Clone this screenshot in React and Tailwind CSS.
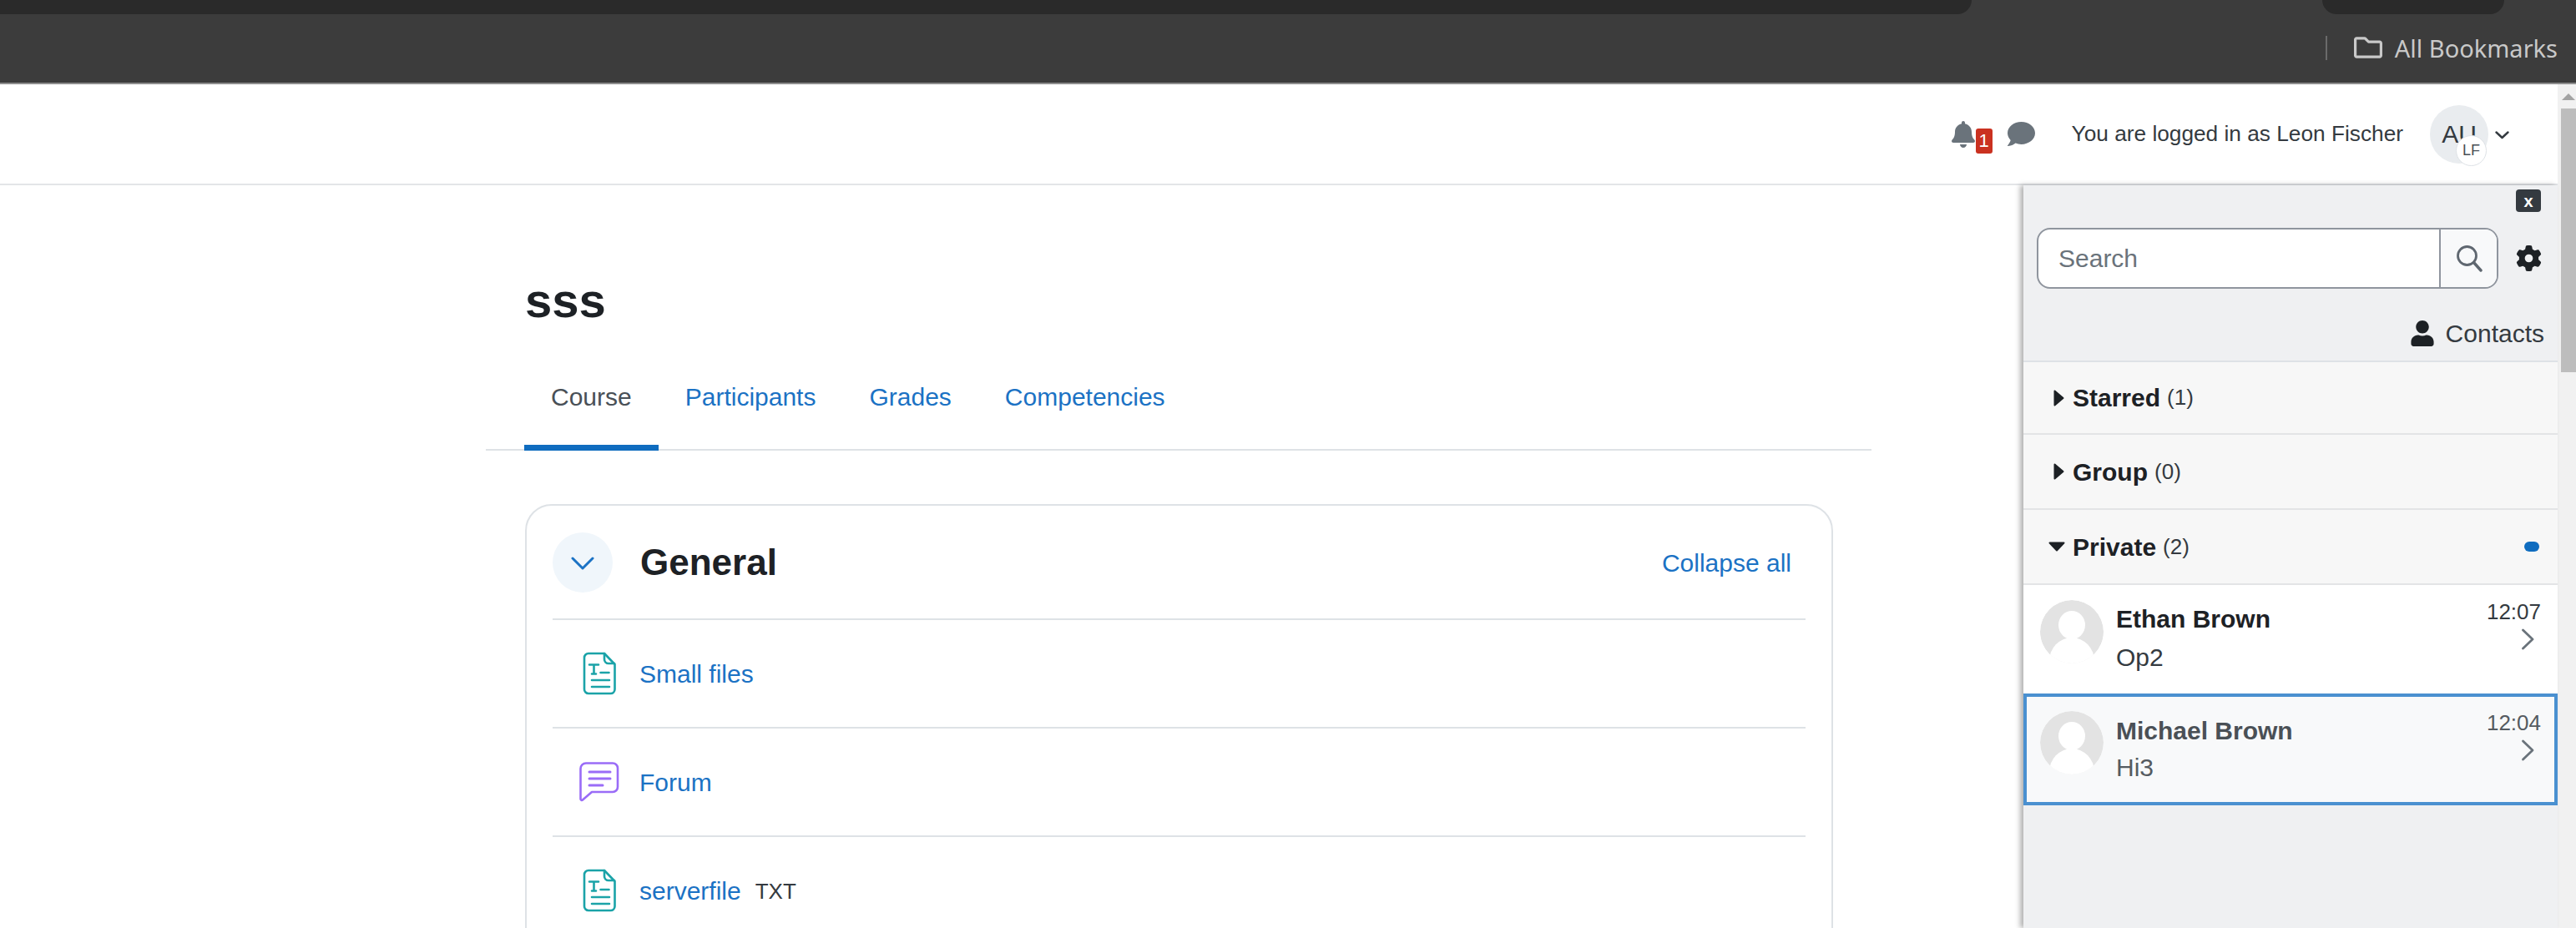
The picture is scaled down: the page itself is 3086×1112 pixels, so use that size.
import React from "react";
import { FaBell, FaComment, FaUser, FaRegFolder } from "react-icons/fa";
import { FaGear } from "react-icons/fa6";

const tabs = ["Course", "Participants", "Grades", "Competencies"];

const FileIcon = () => (
  <svg viewBox="0 0 40 52" className="w-[40px] h-[52px] ml-[4px]" fill="none" stroke="#1ba3a8" strokeWidth="2.6" strokeLinecap="round" strokeLinejoin="round">
    <path d="M7 2H26L38.5 15V45a5 5 0 0 1-5 5H7a5 5 0 0 1-5-5V7a5 5 0 0 1 5-5Z" />
    <path d="M26 2V9a5 5 0 0 0 5 5H38" />
    <path d="M8 15.5H19M13.5 15.5V26.5M11 26.5H16" />
    <path d="M21.5 25H31.5M11 34H32M11 42H32" />
  </svg>
);

const ForumIcon = () => (
  <svg viewBox="0 0 48 48" className="w-[48px] h-[48px]" fill="none" stroke="#9a6cf7" strokeWidth="2.6" strokeLinecap="round" strokeLinejoin="round">
    <path d="M8 1.5H40a6 6 0 0 1 6 6V30a6 6 0 0 1-6 6H15L4 45.5a1.5 1.5 0 0 1-2.5-1V8A6.5 6.5 0 0 1 8 1.5Z" />
    <path d="M12 12H37M12 20H37M12 28H28" strokeWidth="3" />
  </svg>
);

const Avatar = () => (
  <svg viewBox="0 0 76 76" className="w-[76px] h-[76px] shrink-0 rounded-full">
    <circle cx="38" cy="38" r="38" fill="#e3e3e3" />
    <ellipse cx="38" cy="30" rx="16" ry="17" fill="#fff" />
    <ellipse cx="38" cy="73" rx="27" ry="28" fill="#fff" />
  </svg>
);

const CaretRight = () => (
  <svg viewBox="0 0 13 20" className="w-[13px] h-[20px] ml-[6px]" fill="#1d2125" stroke="#1d2125" strokeWidth="2" strokeLinejoin="round">
    <path d="M1.5 1.5L11.5 10L1.5 18.5Z" />
  </svg>
);

const CaretDown = () => (
  <svg viewBox="0 0 20 12" className="w-[20px] h-[12px]" fill="#1d2125" stroke="#1d2125" strokeWidth="2" strokeLinejoin="round">
    <path d="M1.5 1.5H18.5L10 10.5Z" />
  </svg>
);

const RowChevron = () => (
  <svg viewBox="0 0 16 26" className="w-[16px] h-[26px] mt-[6px] mr-[8px]" fill="none" stroke="#6a737b" strokeWidth="2.8" strokeLinecap="round" strokeLinejoin="round">
    <path d="M2.5 2L14 13L2.5 24" />
  </svg>
);

const SearchGlass = () => (
  <svg viewBox="0 0 32 32" className="w-[32px] h-[32px]" fill="none" stroke="#5f6770" strokeWidth="2.8" strokeLinecap="round">
    <circle cx="13.5" cy="12.5" r="11" />
    <path d="M21.5 20.5L30 30" strokeWidth="3.4" />
  </svg>
);

const Section = ({ title, count, open, height, unread }) => (
  <div className={`flex items-center pl-[30px] pr-[22px] bg-[#f7f7f7] border-b-2 border-[#e3e4e6] ${height}`}>
    <div className="w-[20px] mr-[9px] flex items-center">{open ? <CaretDown /> : <CaretRight />}</div>
    <span className="text-[30px] font-bold text-[#1d2125]">{title}</span>
    <span className="text-[26px] text-[#343a40] ml-[8px]">({count})</span>
    {unread && <span className="ml-auto w-[18px] h-[12px] rounded-full bg-[#0f6cbf]"></span>}
  </div>
);

const MessageRow = ({ name, text, time, selected }) => (
  <div className={selected
    ? "flex h-[134px] pl-[16px] pr-[16px] pt-[17px] bg-[#f8f9fa] border-4 border-[#4a90d0] text-[#555b61]"
    : "flex h-[130px] pl-[20px] pr-[20px] pt-[18px] bg-white text-[#343a40]"}>
    <Avatar />
    <div className={selected ? "ml-[15px] flex-1 pt-[6px]" : "ml-[15px] flex-1 pt-[5px]"}>
      <div className={selected ? "text-[30px] leading-[36px] font-bold text-[#4a5056]" : "text-[30px] leading-[36px] font-bold text-[#1d2125]"}>{name}</div>
      <div className={selected ? "text-[30px] leading-[36px] mt-[8px]" : "text-[30px] leading-[36px] mt-[10px]"}>{text}</div>
    </div>
    <div className="flex flex-col items-end">
      <span className="text-[26px] leading-[28px]">{time}</span>
      <RowChevron />
    </div>
  </div>
);

const Activity = ({ icon, name, tag }) => (
  <div className="flex items-center h-[130px] border-t-2 border-[#dee2e6] pl-[32px]">
    <div className="w-[48px] mr-[24px] flex">{icon}</div>
    <a className="text-[30px] text-[#1b72c4]">{name}</a>
    {tag && <span className="text-[26px] text-[#343a40] ml-[17px] mt-[2px]">{tag}</span>}
  </div>
);

export default function App() {
  return (
    <div className="h-[1112px] w-[3086px] overflow-hidden flex flex-col bg-white font-['Liberation_Sans',Arial,sans-serif]">
      {/* browser chrome */}
      <div className="h-[101px] shrink-0 bg-[#3c3c3c] border-b-2 border-[#8d8d8d]">
        <div className="h-[17px] flex">
          <div className="w-[2362px] bg-[#2a2a2a] rounded-br-[22px]"></div>
          <div className="w-[420px]"></div>
          <div className="w-[218px] bg-[#2a2a2a] rounded-b-[22px]"></div>
        </div>
        <div className="h-[82px] flex items-center justify-end pr-[22px] pb-[2px] font-['Noto_Sans',sans-serif] text-[#c9c9c9]">
          <div className="w-[2px] h-[29px] bg-[#6a6a6a] mr-[32px]"></div>
          <FaRegFolder className="w-[34px] h-[34px] mr-[15px]" />
          <span className="text-[29px] leading-none">All Bookmarks</span>
        </div>
      </div>

      <div className="flex-1 flex min-h-0">
        <div className="w-[3064px] flex flex-col min-h-0">
          {/* moodle header */}
          <header className="h-[121px] shrink-0 border-b-2 border-[#e3e5e8] flex items-center justify-end pr-[58px]">
            <div className="relative w-[30px] h-[40px] flex items-center">
              <FaBell className="w-[28px] h-[32px] text-[#6a737b]" />
              <span className="absolute left-[29px] top-[13px] w-[20px] h-[30px] rounded-[3px] bg-[#ca3120] text-white text-[22px] leading-[30px] text-center">1</span>
            </div>
            <FaComment className="w-[33px] h-[33px] ml-[37px] text-[#6a737b]" />
            <span className="ml-[44px] text-[26.25px] text-[#343a40]">You are logged in as Leon Fischer</span>
            <div className="relative ml-[32px] w-[70px] h-[70px] rounded-full bg-[#e9ecef] flex items-center justify-center text-[30px] text-[#343a40]">
              AU
              <span className="absolute left-[31px] top-[36px] w-[37px] h-[37px] rounded-full bg-white border border-[#dee2e6] flex items-center justify-center text-[18px] text-[#495057]">LF</span>
            </div>
            <svg viewBox="0 0 17 10" className="w-[17px] h-[10px] ml-[8px] mt-[2px]" fill="none" stroke="#343a40" strokeWidth="2.4" strokeLinecap="round" strokeLinejoin="round">
              <path d="M1.5 1.5L8.5 8L15.5 1.5" />
            </svg>
          </header>

          <div className="flex-1 flex min-h-0">
            {/* course page */}
            <main className="flex-1 min-w-0 overflow-hidden pl-[582px] pt-[108px]">
              <div className="w-[1660px]">
                <h1 className="pl-[47px] text-[58px] leading-[60px] font-bold text-[#1d2125]">sss</h1>
                <nav className="mt-[22px] pl-[46px] flex border-b-2 border-[#dee2e6] h-[128px]">
                  {tabs.map((t, i) => (
                    <a key={t} className={i === 0
                      ? "h-[128px] px-[32px] pt-[46px] text-[30px] leading-[36px] text-[#495057] border-b-[7px] border-[#0f6cbf]"
                      : "h-[128px] px-[32px] pt-[46px] text-[30px] leading-[36px] text-[#1b72c4]"}>{t}</a>
                  ))}
                </nav>
                <section className="ml-[47px] w-[1567px] mt-[64px] h-[700px] border-2 border-[#dee2e6] rounded-[32px] px-[31px]">
                  <div className="flex items-center pt-[32px] pb-[31px]">
                    <div className="w-[72px] h-[72px] rounded-full bg-[#f0f6fb] flex items-center justify-center">
                      <svg viewBox="0 0 28 16" className="w-[28px] h-[16px] mt-[2px]" fill="none" stroke="#1b72c4" strokeWidth="3" strokeLinecap="round" strokeLinejoin="round">
                        <path d="M2 2L14 14L26 2" />
                      </svg>
                    </div>
                    <h2 className="ml-[33px] text-[44px] leading-[52px] font-bold text-[#1d2125]">General</h2>
                    <a className="ml-auto mr-[17px] text-[30px] text-[#1b72c4]">Collapse all</a>
                  </div>
                  <Activity icon={<FileIcon />} name="Small files" />
                  <Activity icon={<ForumIcon />} name="Forum" />
                  <Activity icon={<FileIcon />} name="serverfile" tag="TXT" />
                </section>
              </div>
            </main>

            {/* message drawer */}
            <aside className="w-[640px] shrink-0 bg-[#eff0f2] shadow-[-4px_0_6px_rgba(0,0,0,0.3)] flex flex-col relative">
              <div className="h-[212px] shrink-0 border-b-2 border-[#dee2e6]">
                <div className="flex justify-end pt-[5px] pr-[20px]">
                  <button className="w-[30px] h-[27px] rounded-[4px] bg-[#343a40] text-white text-[20px] leading-[24px] font-bold">x</button>
                </div>
                <div className="flex items-center mt-[19px] pl-[16px]">
                  <div className="w-[553px] h-[73px] flex rounded-[16px] border-2 border-[#8f959e] bg-white overflow-hidden">
                    <div className="flex-1 pl-[24px] flex items-center text-[30px] text-[#6a737b]">Search</div>
                    <div className="w-[69px] border-l-2 border-[#8f959e] bg-[#f8f9fa] flex items-center justify-center">
                      <SearchGlass />
                    </div>
                  </div>
                  <FaGear className="w-[31px] h-[31px] ml-[21px] text-[#1d2125]" />
                </div>
                <div className="flex items-center justify-end pr-[16px] mt-[31px] text-[30px] text-[#343a40]">
                  <FaUser className="w-[28px] h-[31px] mr-[14px] text-[#1d2125]" />
                  Contacts
                </div>
              </div>
              <Section title="Starred" count="1" height="h-[87px]" />
              <Section title="Group" count="0" height="h-[90px]" />
              <Section title="Private" count="2" height="h-[90px]" open unread />
              <MessageRow name="Ethan Brown" text="Op2" time="12:07" />
              <MessageRow name="Michael Brown" text="Hi3" time="12:04" selected />
            </aside>
          </div>
        </div>

        {/* page scrollbar */}
        <div className="w-[22px] shrink-0 bg-[#f1f1f1] pl-[4px] pt-[11px]">
          <div className="w-0 h-0 ml-[1px] border-x-[8px] border-x-transparent border-b-[8px] border-b-[#a3a3a3]"></div>
          <div className="w-[18px] h-[316px] mt-[10px] bg-[#bdbdbd]"></div>
        </div>
      </div>
    </div>
  );
}
